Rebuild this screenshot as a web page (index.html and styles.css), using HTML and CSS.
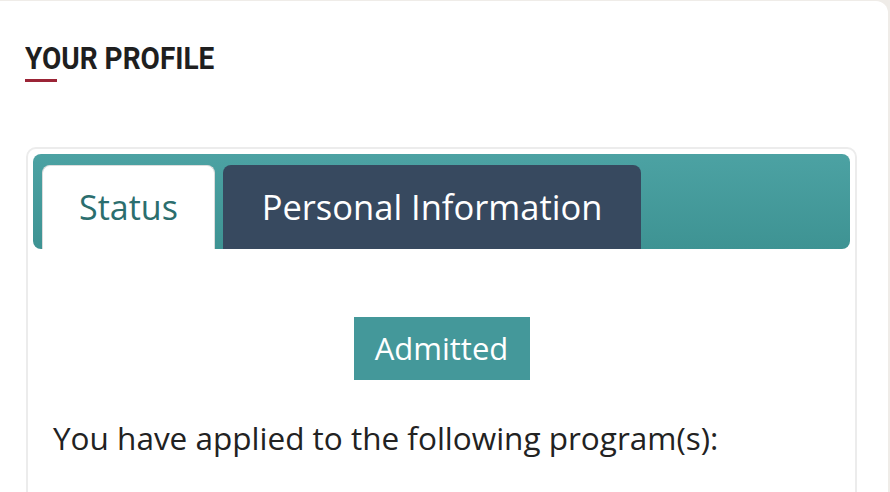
FILE: index.html
```html
<!DOCTYPE html>
<html lang="en">
<head>
<meta charset="utf-8">
<title>Your Profile</title>
<link rel="stylesheet" href="styles.css">
</head>
<body>
<div class="page">
  <h1 class="title">YOUR PROFILE</h1>
  <div class="title-bar"></div>
  <div class="panel">
    <div class="tabs">
      <div class="tab tab-active">Status</div>
      <div class="tab tab-dark">Personal Information</div>
    </div>
    <div class="content">
      <div class="badge-row"><span class="badge">Admitted</span></div>
      <p class="lead">You have applied to the following program(s):</p>
    </div>
  </div>
</div>
</body>
</html>
```
FILE: styles.css
```css
html, body {
  margin: 0;
  padding: 0;
}
body {
  background: #efece8;
  font-family: "Open Sans", "Noto Sans", sans-serif;
  overflow: hidden;
}
.page {
  background: #ffffff;
  margin-top: 1px;
  margin-right: 2px;
  border-top-right-radius: 12px;
  height: 491px;
  padding: 40px 0 0 0;
  box-sizing: border-box;
  overflow: hidden;
}
.title {
  margin: 0 0 0 25px;
  font-family: Roboto, "Liberation Sans", sans-serif;
  font-weight: 700;
  font-size: 32px;
  line-height: 34px;
  color: #1f1f1f;
  display: inline-block;
  transform: scaleX(0.875);
  transform-origin: left center;
}
.title-bar {
  width: 32px;
  height: 3px;
  background: #9b2436;
  margin: 4px 0 0 25px;
}
.panel {
  margin: 65px 0 0 26px;
  width: 831px;
  height: 400px;
  border: 2px solid #ececec;
  border-radius: 10px;
  padding: 5px 5px 0 5px;
  box-sizing: border-box;
}
.tabs {
  display: flex;
  align-items: flex-end;
  gap: 8px;
  height: 95px;
  padding: 11px 0 0 9px;
  box-sizing: border-box;
  background: linear-gradient(#4ca2a3, #3e9393);
  border-radius: 8px;
}
.tab {
  height: 84px;
  box-sizing: border-box;
  display: flex;
  align-items: center;
  justify-content: center;
  border-radius: 8px 8px 0 0;
  padding-bottom: 2px;
}
.tab-active {
  width: 173px;
  background: #ffffff;
  color: #2b6e6e;
  border: 1px solid #dcdcdc;
  border-bottom: none;
  font-size: 34px;
}
.tab-dark {
  width: 418px;
  background: #37495f;
  color: #ffffff;
  font-size: 34.5px;
}
.content {
  padding: 68px 0 0 20px;
}
.badge-row {
  display: flex;
  justify-content: center;
}
.badge {
  width: 176px;
  height: 63px;
  background: #44989a;
  color: #ffffff;
  font-size: 31px;
  display: flex;
  align-items: center;
  justify-content: center;
  margin-left: -20px;
  padding-bottom: 2px;
  box-sizing: border-box;
}
.lead {
  margin: 36px 0 0 0;
  font-size: 31.5px;
  line-height: 44px;
  color: #222222;
}
```
